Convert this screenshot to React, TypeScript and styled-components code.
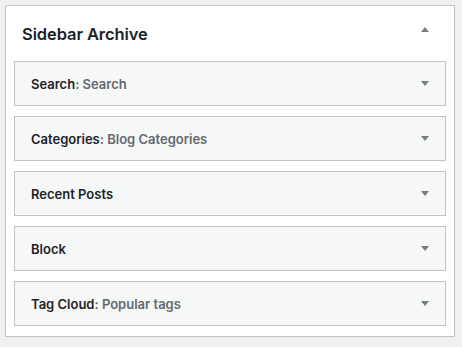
import React from "react";
import styled, { createGlobalStyle } from "styled-components";

const Global = createGlobalStyle`
  html, body { margin: 0; padding: 0; background: #f0f0f1; }
  body { font-family: Inter, "Noto Sans", "Liberation Sans", sans-serif; color: #1d2327; }
`;

const Page = styled.div`
  padding: 5px 0 0 5px;
`;

const Sidebar = styled.section`
  box-sizing: border-box;
  width: 450px;
  height: 332px;
  background: #fff;
  border: 1px solid #c3c4c7;
  display: flex;
  flex-direction: column;
`;

const Header = styled.div`
  height: 55px;
  display: flex;
  align-items: center;
  justify-content: space-between;
  padding: 0 25px 0 16px;
  box-sizing: border-box;
`;

const Title = styled.h2`
  margin: 0;
  font-size: 16.5px;
  font-weight: 600;
  letter-spacing: -0.1px;
  padding-top: 1px;
`;

const Arrow = styled.span<{ $up?: boolean }>`
  width: 0;
  height: 0;
  border-left: 4px solid transparent;
  border-right: 4px solid transparent;
  ${(p) =>
    p.$up
      ? "border-bottom: 5px solid #787c82; margin-bottom: 8px;"
      : "border-top: 5px solid #787c82;"}
`;

const List = styled.div`
  display: flex;
  flex-direction: column;
  gap: 10px;
  padding: 0 8px;
`;

const Row = styled.div`
  box-sizing: border-box;
  height: 45px;
  background: #f6f7f7;
  border: 1px solid #c3c4c7;
  display: flex;
  align-items: center;
  justify-content: space-between;
  padding: 0 16px 0 16px;
`;

const Name = styled.span`
  font-size: 13px;
  font-weight: 600;
  color: #1d2327;
`;

const Sub = styled.span`
  color: #646970;
`;

const widgets: { name: string; title?: string }[] = [
  { name: "Search", title: "Search" },
  { name: "Categories", title: "Blog Categories" },
  { name: "Recent Posts" },
  { name: "Block" },
  { name: "Tag Cloud", title: "Popular tags" },
];

export default function App() {
  return (
    <Page>
      <Global />
      <Sidebar>
        <Header>
          <Title>Sidebar Archive</Title>
          <Arrow $up />
        </Header>
        <List>
          {widgets.map((w) => (
            <Row key={w.name}>
              <Name>
                {w.name}
                {w.title && <Sub>: {w.title}</Sub>}
              </Name>
              <Arrow />
            </Row>
          ))}
        </List>
      </Sidebar>
    </Page>
  );
}
